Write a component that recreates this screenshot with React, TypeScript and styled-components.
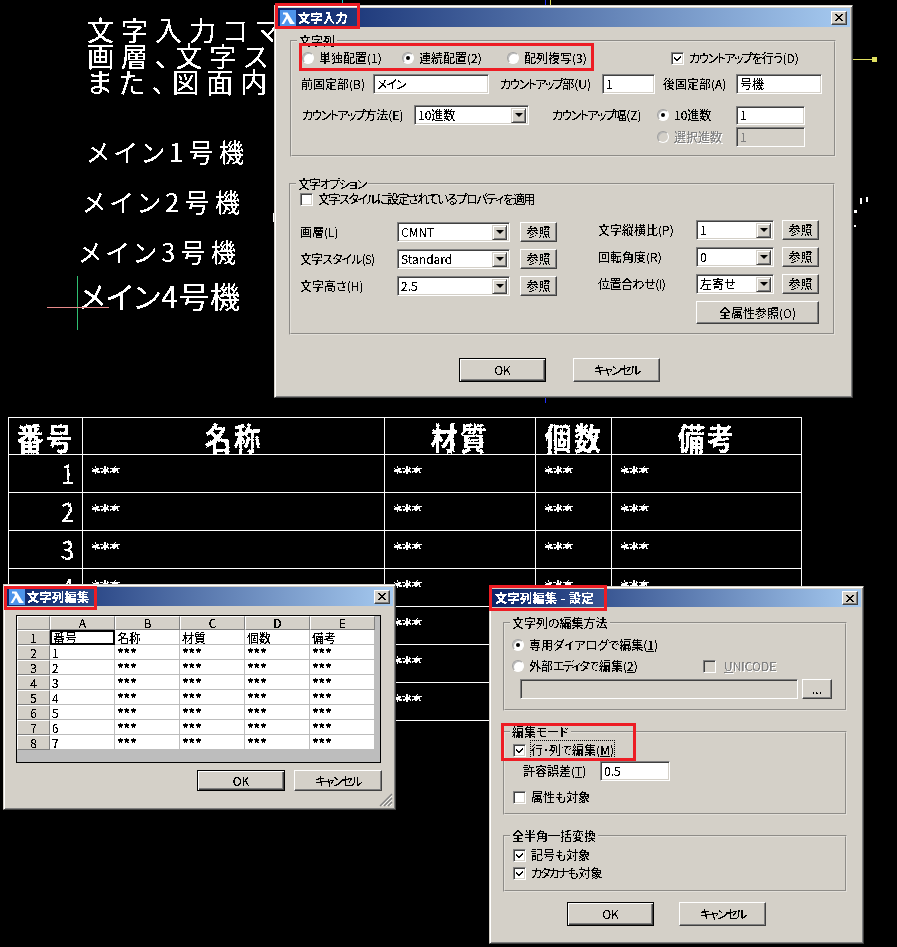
import React from "react";
import styled, { createGlobalStyle, css } from "styled-components";

const Global = createGlobalStyle`
  html, body { margin: 0; padding: 0; background: #000; }
  #root { width: 897px; height: 947px; }
`;

const FONT = `"Noto Sans CJK JP", "Liberation Sans", sans-serif`;
const FACE = "#d4d0c8";

const crisp = css`
  filter: url(#crisp);
`;

const rough = css`
  filter: url(#rough);
`;

const FilterDefs = styled.svg`
  position: absolute;
  width: 0;
  height: 0;
`;

const Canvas = styled.div`
  position: relative;
  width: 897px;
  height: 947px;
  background: #000;
  overflow: hidden;
  font-family: ${FONT};
  font-feature-settings: "palt";
`;

/* ---- CAD drawing ---- */
const CadLine = styled.div<{ $x: number; $y: number; $size: number; $ls: number; $lh?: number }>`
  position: absolute;
  left: ${(p) => p.$x}px;
  top: ${(p) => p.$y}px;
  color: #fff;
  white-space: pre;
  font-size: ${(p) => p.$size}px;
  letter-spacing: ${(p) => p.$ls}px;
  line-height: ${(p) => p.$lh ?? p.$size}px;
  ${crisp}
`;

const Tick = styled.div<{ $x: number; $y: number; $w: number; $h: number; $c: string }>`
  position: absolute;
  left: ${(p) => p.$x}px;
  top: ${(p) => p.$y}px;
  width: ${(p) => p.$w}px;
  height: ${(p) => p.$h}px;
  background: ${(p) => p.$c};
`;

const CadTable = styled.div`
  position: absolute;
  left: 8px;
  top: 417px;
  display: grid;
  grid-template-columns: 74px 302px 151px 76px 190px;
  grid-template-rows: 37px repeat(7, 38px);
  width: 793px;
  border-top: 1px solid #fff;
  border-left: 1px solid #fff;
  box-sizing: content-box;
`;

const CadHead = styled.div`
  border-right: 1px solid #fff;
  border-bottom: 1px solid #fff;
  display: flex;
  align-items: center;
  justify-content: center;
  color: #fff;
`;

const CadHeadText = styled.span`
  display: block;
  font-size: 31px;
  line-height: 33px;
  letter-spacing: 3px;
  font-weight: 700;
  transform: scaleX(0.86);
  ${rough}
`;

const CadNum = styled.div`
  border-right: 1px solid #fff;
  border-bottom: 1px solid #fff;
  color: #fff;
  display: flex;
  justify-content: flex-end;
  padding: 2px 7px 0 0;
`;

const CadNumText = styled.span`
  display: block;
  font-size: 27px;
  line-height: 32px;
  transform: scaleX(0.85);
  ${rough}
`;

const CadCell = styled.div`
  border-right: 1px solid #fff;
  border-bottom: 1px solid #fff;
  color: #fff;
  padding: 5px 0 0 8px;
`;

const CadStars = styled.span`
  display: inline-block;
  font-family: "DejaVu Sans", sans-serif;
  font-weight: 700;
  font-size: 18px;
  line-height: 20px;
  padding: 2px;
  margin: -2px;
  ${rough}
`;

/* ---- Windows ---- */
const Win = styled.section<{ $x: number; $y: number; $w: number; $h: number }>`
  position: absolute;
  left: ${(p) => p.$x}px;
  top: ${(p) => p.$y}px;
  width: ${(p) => p.$w}px;
  height: ${(p) => p.$h}px;
  box-sizing: border-box;
  background: ${FACE};
  border: 1px solid;
  border-color: ${FACE} #404040 #404040 ${FACE};
  box-shadow: inset 1px 1px 0 #fff, inset -1px -1px 0 #808080;
  padding: 2px;
  color: #000;
  font-size: 12px;
  line-height: 14px;
`;

const TitleBar = styled.header<{ $h: number }>`
  height: ${(p) => p.$h}px;
  display: flex;
  align-items: center;
  background: linear-gradient(90deg, #0a246a 0%, #a6caf0 100%);
  padding: 0 3px 0 3px;
  gap: 2px;
`;

const TitleText = styled.span<{ $pad?: number }>`
  color: #fff;
  font-weight: 700;
  font-size: 12px;
  letter-spacing: 0.5px;
  font-feature-settings: normal;
  padding-left: ${(p) => p.$pad ?? 0}px;
  white-space: pre;
  ${crisp}
`;

const CloseBtn = styled.button`
  margin-left: auto;
  width: 16px;
  height: 14px;
  padding: 0;
  display: flex;
  align-items: center;
  justify-content: center;
  background: ${FACE};
  border: 1px solid;
  border-color: #fff #404040 #404040 #fff;
  box-shadow: inset -1px -1px 0 #808080;
`;

const CloseIcon = () => (
  <svg width="8" height="7" viewBox="0 0 8 7" shapeRendering="crispEdges">
    <path d="M0 0h2v1h1v1h2V1h1V0h2v1H7v1H6v1H5v1h1v1h1v1h1v1H6V6H5V5H3v1H2v1H0V6h1V5h1V4h1V3H2V2H1V1H0z" fill="#000" />
  </svg>
);

const AppIcon = () => (
  <svg width="16" height="16" viewBox="0 0 16 16" shapeRendering="geometricPrecision">
    <rect width="16" height="16" fill="#4d94ea" />
    <path d="M3 2.5h4.5L13 11.5c.5.8 1 1 1.5 1V14H10L7.2 8.6 4 14H1.5L6 6.2 5.2 4.5H3z" fill="#fff" />
  </svg>
);

/* ---- Controls ---- */
const Label = styled.label<{ $disabled?: boolean; $ls?: number }>`
  white-space: nowrap;
  letter-spacing: ${(p) => p.$ls ?? 0}px;
  color: ${(p) => (p.$disabled ? "#808080" : "#000")};
  text-shadow: ${(p) => (p.$disabled ? "1px 1px 0 #fff" : "none")};
  ${crisp}
`;

const Tight = styled.span<{ $ls: number }>`
  letter-spacing: ${(p) => p.$ls}px;
`;

const inset = css`
  border: 1px solid;
  border-color: #808080 #fff #fff #808080;
  box-shadow: inset 1px 1px 0 #404040, inset -1px -1px 0 ${FACE};
  box-sizing: border-box;
`;

const TextBox = styled.div<{ $disabled?: boolean; $h?: number }>`
  ${inset}
  height: ${(p) => p.$h ?? 20}px;
  background: ${(p) => (p.$disabled ? FACE : "#fff")};
  color: ${(p) => (p.$disabled ? "#808080" : "#000")};
  padding: 1px 3px;
  display: flex;
  align-items: center;
`;

const FieldText = styled.span<{ $ls?: number }>`
  white-space: nowrap;
  letter-spacing: ${(p) => p.$ls ?? 0}px;
  ${crisp}
`;

const SheetStars = styled(FieldText)`
  font-weight: 700;
  font-size: 13px;
`;

const ComboBox = styled.div`
  ${inset}
  height: 20px;
  background: #fff;
  display: flex;
  align-items: center;
  justify-content: space-between;
  padding: 2px 2px 2px 3px;
`;

const ComboArrow = styled.span`
  width: 15px;
  height: 15px;
  background: ${FACE};
  border: 1px solid;
  border-color: ${FACE} #404040 #404040 ${FACE};
  box-shadow: inset 1px 1px 0 #fff, inset -1px -1px 0 #808080;
  box-sizing: border-box;
  display: flex;
  align-items: center;
  justify-content: center;
  flex: none;
  &::after {
    content: "";
    border-left: 4px solid transparent;
    border-right: 4px solid transparent;
    border-top: 4px solid #000;
  }
`;

const Combo = ({ value }: { value: string }) => (
  <ComboBox>
    <FieldText>{value}</FieldText>
    <ComboArrow />
  </ComboBox>
);

const PushButton = styled.button<{ $default?: boolean; $h?: number }>`
  height: ${(p) => p.$h ?? 20}px;
  box-sizing: border-box;
  padding: 0;
  background: ${FACE};
  font: inherit;
  font-feature-settings: "palt";
  color: #000;
  border: 1px solid;
  border-color: ${(p) => (p.$default ? "#000" : `#fff #404040 #404040 #fff`)};
  box-shadow: ${(p) =>
    p.$default
      ? "inset 1px 1px 0 #fff, inset -1px -1px 0 #404040, inset -2px -2px 0 #808080"
      : "inset -1px -1px 0 #808080"};
`;

const BtnText = styled.span<{ $ls?: number }>`
  letter-spacing: ${(p) => p.$ls ?? 0}px;
  ${crisp}
`;

const RadioDot = styled.span<{ $on?: boolean; $disabled?: boolean }>`
  width: 12px;
  height: 12px;
  border-radius: 50%;
  box-sizing: border-box;
  flex: none;
  border: 1px solid;
  border-color: #a0a0a0 #fff #fff #a0a0a0;
  background: ${(p) => (p.$disabled ? FACE : "#fff")};
  box-shadow: inset 1px 1px 0 #b8b8b8;
  display: flex;
  align-items: center;
  justify-content: center;
  &::after {
    content: "";
    display: ${(p) => (p.$on ? "block" : "none")};
    width: 4px;
    height: 4px;
    border-radius: 50%;
    background: #000;
  }
`;

const CheckBoxFrame = styled.span<{ $disabled?: boolean }>`
  ${inset}
  width: 13px;
  height: 13px;
  flex: none;
  background: ${(p) => (p.$disabled ? FACE : "#fff")};
  display: flex;
  align-items: center;
  justify-content: center;
`;

const Inline = styled.div<{ $gap?: number }>`
  display: flex;
  align-items: center;
  gap: ${(p) => p.$gap ?? 5}px;
  white-space: nowrap;
`;

const CheckMark = () => (
  <svg width="9" height="9" viewBox="0 0 9 9" shapeRendering="crispEdges">
    <path d="M8 1v2L7 4 6 5 5 6 4 7H3L1 5V3l2 2 1 0 1-1 1-1 1-1z" fill="#000" />
  </svg>
);

type ChoiceProps = { on?: boolean; disabled?: boolean; ls?: number; gap?: number; children: React.ReactNode };

const Radio = ({ on, disabled, ls, children }: ChoiceProps) => (
  <Inline>
    <RadioDot $on={on} $disabled={disabled} />
    <Label $disabled={disabled} $ls={ls}>{children}</Label>
  </Inline>
);

const Check = ({ on, disabled, ls, gap, children }: ChoiceProps) => (
  <Inline $gap={gap}>
    <CheckBoxFrame $disabled={disabled}>{on && <CheckMark />}</CheckBoxFrame>
    <Label $disabled={disabled} $ls={ls}>{children}</Label>
  </Inline>
);

const Group = styled.fieldset<{ $mt: number; $ml: number; $w: number; $h: number; $pl?: number }>`
  display: block;
  box-sizing: border-box;
  margin: ${(p) => p.$mt}px 0 0 ${(p) => p.$ml}px;
  width: ${(p) => p.$w}px;
  height: ${(p) => p.$h}px;
  border: 2px groove #e2dfd9;
  padding: 0 0 0 ${(p) => p.$pl ?? 0}px;
  min-inline-size: 0;
`;

const Legend = styled.legend<{ $ls?: number }>`
  margin-left: 5px;
  padding: 0 2px;
  line-height: 14px;
  height: 14px;
  letter-spacing: ${(p) => p.$ls ?? 0}px;
  ${crisp}
`;

const Row = styled.div<{ $cols: string; $h?: number; $mt?: number }>`
  display: grid;
  grid-template-columns: ${(p) => p.$cols};
  align-items: center;
  height: ${(p) => p.$h ?? 20}px;
  margin-top: ${(p) => p.$mt ?? 0}px;
`;

const Columns = styled.div`
  display: flex;
  margin-top: 7px;
`;

const Stack = styled.div<{ $ml: number; $mt: number; $gap: number }>`
  display: flex;
  flex-direction: column;
  gap: ${(p) => p.$gap}px;
  margin: ${(p) => p.$mt}px 0 0 ${(p) => p.$ml}px;
`;

const FooterButtons = styled.div<{ $ml: number; $mt: number; $gap: number; $w: number; $h: number }>`
  display: grid;
  grid-template-columns: ${(p) => p.$w}px ${(p) => p.$w}px;
  grid-auto-rows: ${(p) => p.$h}px;
  gap: ${(p) => p.$gap}px;
  margin: ${(p) => p.$mt}px 0 0 ${(p) => p.$ml}px;
`;

const CheckRow = styled.div<{ $ml: number; $mt: number }>`
  margin: ${(p) => p.$mt}px 0 0 ${(p) => p.$ml}px;
`;

const FocusText = styled.span`
  outline: 1px dotted #000;
  outline-offset: 0;
`;

const Under = styled.span`
  text-decoration: underline;
`;

/* ---- Sheet grid ---- */
const SheetFrame = styled.div`
  margin: 9px 0 0 10px;
  width: 365px;
  height: 148px;
  box-sizing: border-box;
  border: 1px solid #000;
  background: #bdbdbd;
  display: grid;
  grid-template-columns: 33px repeat(5, 65px) 1fr;
  grid-template-rows: 14px repeat(8, 15px) 1fr;
`;

const SheetHead = styled.div`
  background: ${FACE};
  border: 1px solid;
  border-color: #fff #808080 #808080 #fff;
  box-sizing: border-box;
  display: flex;
  align-items: center;
  justify-content: center;
  line-height: 12px;
`;

const SheetCell = styled.div<{ $active?: boolean }>`
  background: #fff;
  box-sizing: border-box;
  border-right: 1px solid #bdbdbd;
  border-bottom: 1px solid #bdbdbd;
  padding-left: 2px;
  display: flex;
  align-items: center;
  line-height: 13px;
  ${(p) => p.$active && css`
    border: 2px solid #000;
    padding-left: 1px;
  `}
`;

const SheetGap = styled.div`
  background: #bdbdbd;
`;

const SheetFoot = styled.div`
  grid-column: 1 / -1;
`;

const Grip = styled.svg`
  position: absolute;
  right: 2px;
  bottom: 2px;
`;

const RedFrame = styled.div<{ $x: number; $y: number; $w: number; $h: number }>`
  position: absolute;
  left: ${(p) => p.$x}px;
  top: ${(p) => p.$y}px;
  width: ${(p) => p.$w}px;
  height: ${(p) => p.$h}px;
  box-sizing: border-box;
  border: 3px solid #ed1c24;
`;

const sheetRows = [
  ["番号", "名称", "材質", "個数", "備考"],
  ["1", "***", "***", "***", "***"],
  ["2", "***", "***", "***", "***"],
  ["3", "***", "***", "***", "***"],
  ["4", "***", "***", "***", "***"],
  ["5", "***", "***", "***", "***"],
  ["6", "***", "***", "***", "***"],
  ["7", "***", "***", "***", "***"],
];

const OptionRow = ({ label, value, labelW, comboW, gap, ls }: { label: string; value: string; labelW: number; comboW: number; gap: number; ls?: number }) => (
  <Row $cols={`${labelW}px ${comboW}px ${gap}px 37px`}>
    <Label $ls={ls}>{label}</Label>
    <Combo value={value} />
    <span />
    <PushButton>
      <BtnText>参照</BtnText>
    </PushButton>
  </Row>
);

export default function App() {
  return (
    <Canvas>
      <Global />
      <FilterDefs aria-hidden="true">
        <defs>
          <filter id="crisp" x="-5%" y="-5%" width="110%" height="110%" colorInterpolationFilters="sRGB">
            <feComponentTransfer>
              <feFuncA type="discrete" tableValues="0 0 1 1 1" />
            </feComponentTransfer>
          </filter>
          <filter id="rough" x="-10%" y="-10%" width="120%" height="120%" colorInterpolationFilters="sRGB">
            <feTurbulence type="fractalNoise" baseFrequency="0.55" numOctaves="1" seed="4" result="noise" />
            <feDisplacementMap in="SourceGraphic" in2="noise" scale="3.2" xChannelSelector="R" yChannelSelector="G" />
            <feComponentTransfer>
              <feFuncA type="discrete" tableValues="0 0 1 1 1" />
            </feComponentTransfer>
          </filter>
        </defs>
      </FilterDefs>

      {/* CAD drawing */}
      <CadLine $x={87} $y={17} $size={27} $ls={7} $lh={26}>
        {"文字入力コマ\n画層、文字ス\nまた、図面内"}
      </CadLine>
      <CadLine $x={87} $y={139} $size={25} $ls={5.4}>メイン1号機</CadLine>
      <CadLine $x={83} $y={189} $size={25} $ls={5.4}>メイン2号機</CadLine>
      <CadLine $x={79} $y={239} $size={25} $ls={5.4}>メイン3号機</CadLine>
      <CadLine $x={79} $y={280} $size={30} $ls={1}>メイン4号機</CadLine>
      <Tick $x={77} $y={276} $w={1} $h={54} $c="#2fbf71" />
      <Tick $x={47} $y={307} $w={62} $h={1} $c="#e88a8a" />
      <Tick $x={342} $y={0} $w={1} $h={5} $c="#19d3d3" />
      <Tick $x={545} $y={0} $w={1} $h={5} $c="#2030ff" />
      <Tick $x={550} $y={0} $w={1} $h={5} $c="#e0e060" />
      <Tick $x={545} $y={397} $w={1} $h={6} $c="#2030ff" />
      <Tick $x={852} $y={59} $w={22} $h={1} $c="#e0e060" />
      <Tick $x={872} $y={57} $w={5} $h={5} $c="#e0e060" />
      <Tick $x={854} $y={210} $w={3} $h={3} $c="#fff" />
      <Tick $x={854} $y={225} $w={2} $h={2} $c="#fff" />
      <Tick $x={860} $y={198} $w={2} $h={6} $c="#fff" />
      <Tick $x={866} $y={197} $w={2} $h={5} $c="#fff" />
      <Tick $x={273} $y={213} $w={1} $h={9} $c="#fff" />

      <CadTable>
        {["番号", "名称", "材質", "個数", "備考"].map((h) => (
          <CadHead key={h}>
            <CadHeadText>{h}</CadHeadText>
          </CadHead>
        ))}
        {[1, 2, 3, 4, 5, 6, 7].map((n) => (
          <React.Fragment key={n}>
            <CadNum><CadNumText>{n}</CadNumText></CadNum>
            <CadCell><CadStars>***</CadStars></CadCell>
            <CadCell><CadStars>***</CadStars></CadCell>
            <CadCell><CadStars>***</CadStars></CadCell>
            <CadCell><CadStars>***</CadStars></CadCell>
          </React.Fragment>
        ))}
      </CadTable>

      {/* 文字入力 */}
      <Win $x={274} $y={5} $w={579} $h={393}>
        <TitleBar $h={19}>
          <AppIcon />
          <TitleText>文字入力</TitleText>
          <CloseBtn><CloseIcon /></CloseBtn>
        </TitleBar>

        <Group $mt={7} $ml={13} $w={546} $h={123}>
          <Legend>文字列</Legend>
          <Row $cols="10px 100px 105px 164px auto" $h={13} $mt={3}>
            <span />
            <Radio>単独配置(1)</Radio>
            <Radio on>連続配置(2)</Radio>
            <Radio>配列複写(3)</Radio>
            <Check on><Tight $ls={-1.6}>カウントアップ</Tight><Tight $ls={-0.6}>を行う</Tight>(D)</Check>
          </Row>
          <Row $cols="9px 72px 116px 11px 102px 53px 8px 73px 86px" $h={20} $mt={10}>
            <span />
            <Label>前固定部(B)</Label>
            <TextBox><FieldText $ls={-1}>メイン</FieldText></TextBox>
            <span />
            <Label><Tight $ls={-1.6}>カウントアップ</Tight>部(U)</Label>
            <TextBox><FieldText>1</FieldText></TextBox>
            <span />
            <Label>後固定部(A)</Label>
            <TextBox><FieldText>号機</FieldText></TextBox>
          </Row>
          <Row $cols="10px 112px 115px 23px 105px 79px 69px" $h={19} $mt={11}>
            <span />
            <Label><Tight $ls={-1.6}>カウントアップ</Tight>方法(E)</Label>
            <Combo value="10進数" />
            <span />
            <Label><Tight $ls={-1.6}>カウントアップ</Tight>幅(Z)</Label>
            <Radio on>10進数</Radio>
            <TextBox $h={19}><FieldText>1</FieldText></TextBox>
          </Row>
          <Row $cols="365px 79px 69px" $h={20} $mt={3}>
            <span />
            <Radio disabled>選択進数</Radio>
            <TextBox $disabled><FieldText>1</FieldText></TextBox>
          </Row>
        </Group>

        <Group $mt={20} $ml={12} $w={546} $h={158}>
          <Legend $ls={-1.3}>文字オプション</Legend>
          <CheckRow $ml={9} $mt={1}>
            <Check ls={-1.4}>文字スタイルに設定されているプロパティを適用</Check>
          </CheckRow>
          <Columns>
            <Stack $ml={9} $mt={9} $gap={7}>
              <OptionRow label="画層(L)" value="CMNT" labelW={97} comboW={113} gap={10} />
              <OptionRow label="文字スタイル(S)" value="Standard" labelW={97} comboW={113} gap={10} ls={-0.9} />
              <OptionRow label="文字高さ(H)" value="2.5" labelW={97} comboW={113} gap={10} />
            </Stack>
            <Stack $ml={41} $mt={7} $gap={7}>
              <OptionRow label="文字縦横比(P)" value="1" labelW={98} comboW={78} gap={8} />
              <OptionRow label="回転角度(R)" value="0" labelW={98} comboW={78} gap={8} />
              <OptionRow label="位置合わせ(I)" value="左寄せ" labelW={98} comboW={78} gap={8} ls={-0.5} />
              <Row $cols="98px 123px" $h={23}>
                <span />
                <PushButton $h={23}><BtnText>全属性参照(O)</BtnText></PushButton>
              </Row>
            </Stack>
          </Columns>
        </Group>

        <FooterButtons $ml={182} $mt={23} $gap={27} $w={87} $h={24}>
          <PushButton $default $h={24}><BtnText>OK</BtnText></PushButton>
          <PushButton $h={24}><BtnText $ls={-1.8}>キャンセル</BtnText></PushButton>
        </FooterButtons>
      </Win>

      {/* 文字列編集 */}
      <Win $x={3} $y={584} $w={393} $h={226}>
        <TitleBar $h={19}>
          <AppIcon />
          <TitleText>文字列編集</TitleText>
          <CloseBtn><CloseIcon /></CloseBtn>
        </TitleBar>
        <SheetFrame>
          <SheetHead />
          {["A", "B", "C", "D", "E"].map((c) => (
            <SheetHead key={c}><FieldText>{c}</FieldText></SheetHead>
          ))}
          <SheetGap />
          {sheetRows.map((r, i) => (
            <React.Fragment key={i}>
              <SheetHead><FieldText>{i + 1}</FieldText></SheetHead>
              {r.map((v, j) => (
                <SheetCell key={j} $active={i === 0 && j === 0}>
                  {v === "***" ? <SheetStars>{v}</SheetStars> : <FieldText>{v}</FieldText>}
                </SheetCell>
              ))}
              <SheetGap />
            </React.Fragment>
          ))}
          <SheetFoot />
        </SheetFrame>
        <FooterButtons $ml={191} $mt={7} $gap={9} $w={88} $h={21}>
          <PushButton $default $h={21}><BtnText>OK</BtnText></PushButton>
          <PushButton $h={21}><BtnText $ls={-1.8}>キャンセル</BtnText></PushButton>
        </FooterButtons>
        <Grip width="14" height="14" viewBox="0 0 14 14">
          <path d="M13 1L1 13M13 5L5 13M13 9L9 13" stroke="#808080" strokeWidth="1.4" />
          <path d="M13 3L3 13M13 7L7 13M13 11L11 13" stroke="#fff" strokeWidth="0.8" />
        </Grip>
      </Win>

      {/* 文字列編集 - 設定 */}
      <Win $x={489} $y={586} $w={375} $h={358}>
        <TitleBar $h={18}>
          <TitleText>文字列編集 - 設定</TitleText>
          <CloseBtn><CloseIcon /></CloseBtn>
        </TitleBar>
        <Group $mt={9} $ml={11} $w={344} $h={95}>
          <Legend>文字列の編集方法</Legend>
          <CheckRow $ml={7} $mt={8}>
            <Radio on>専用ダイアログで編集(<Under>1</Under>)</Radio>
          </CheckRow>
          <Row $cols="198px auto" $h={14} $mt={7}>
            <CheckRow $ml={7} $mt={0}>
              <Radio>外部<Tight $ls={-1.7}>エディタ</Tight>で編集(<Under>2</Under>)</Radio>
            </CheckRow>
            <Check disabled gap={8}><Under>U</Under>NICODE</Check>
          </Row>
          <Row $cols="15px 278px 4px 30px" $h={20} $mt={6}>
            <span />
            <TextBox $disabled />
            <span />
            <PushButton><BtnText>...</BtnText></PushButton>
          </Row>
        </Group>

        <Group $mt={14} $ml={11} $w={344} $h={90}>
          <Legend>編集モード</Legend>
          <CheckRow $ml={8} $mt={4}>
            <Check on><FocusText>行･列で編集(<Under>M</Under>)</FocusText></Check>
          </CheckRow>
          <Row $cols="18px 77px 70px" $h={20} $mt={4}>
            <span />
            <Label>許容誤差(<Under>T</Under>)</Label>
            <TextBox><FieldText>0.5</FieldText></TextBox>
          </Row>
          <CheckRow $ml={8} $mt={9}>
            <Check>属性も対象</Check>
          </CheckRow>
        </Group>

        <Group $mt={14} $ml={11} $w={344} $h={63}>
          <Legend>全半角一括変換</Legend>
          <CheckRow $ml={8} $mt={5}>
            <Check on>記号も対象</Check>
          </CheckRow>
          <CheckRow $ml={8} $mt={4}>
            <Check on><Tight $ls={-2}>カタカナ</Tight>も対象</Check>
          </CheckRow>
        </Group>

        <FooterButtons $ml={75} $mt={10} $gap={25} $w={87} $h={24}>
          <PushButton $default $h={24}><BtnText>OK</BtnText></PushButton>
          <PushButton $h={24}><BtnText $ls={-1.8}>キャンセル</BtnText></PushButton>
        </FooterButtons>
      </Win>

      {/* 注釈 */}
      <RedFrame $x={275} $y={3} $w={85} $h={26} />
      <RedFrame $x={299} $y={43} $w={295} $h={28} />
      <RedFrame $x={4} $y={586} $w={93} $h={24} />
      <RedFrame $x={489} $y={585} $w={118} $h={26} />
      <RedFrame $x={501} $y={723} $w={135} $h={38} />
    </Canvas>
  );
}
